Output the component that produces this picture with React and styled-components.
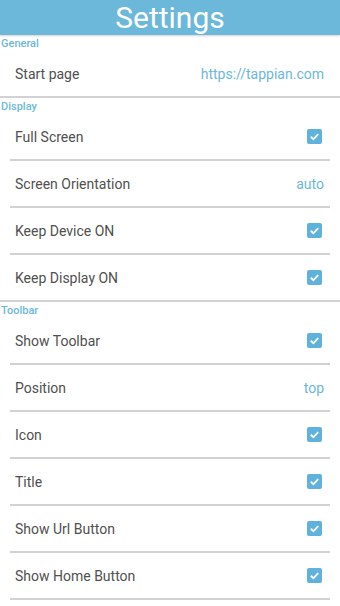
import React from 'react'
import styled, { createGlobalStyle } from 'styled-components'

const GlobalStyle = createGlobalStyle`
  html, body {
    margin: 0;
    padding: 0;
    background: #fff;
    font-family: Roboto, 'Noto Sans', sans-serif;
  }
`

const blue = '#6cb8da'

const Page = styled.div`
  width: 340px;
  height: 606px;
  overflow: hidden;
  background: #fff;
`

const AppBar = styled.header`
  height: 35px;
  background: ${blue};
  color: #fff;
  display: flex;
  align-items: center;
  justify-content: center;
  font-size: 30px;
  line-height: 1;
  padding-top: 1px;
  box-sizing: border-box;
  box-shadow: 0 1px 2px rgba(0, 0, 0, 0.18);
  position: relative;
  z-index: 1;
`

const Section = styled.section`
  border-bottom: ${(p) => (p.last ? 'none' : '2px solid #d2d2d2')};
`

const SectionTitle = styled.div`
  height: 16px;
  padding-left: 1px;
  display: flex;
  align-items: center;
  font-size: 11px;
  font-weight: 500;
  color: ${blue};
`

const Row = styled.div`
  height: 45px;
  margin: 0 10px;
  padding: 0 6px 0 5px;
  display: flex;
  align-items: center;
  justify-content: space-between;
  border-bottom: ${(p) => (p.divider ? '2px solid #d2d2d2' : 'none')};
`

const Label = styled.span`
  font-size: 14px;
  color: #505050;
`

const Value = styled.span`
  font-size: 14px;
  color: ${blue};
`

const Box = styled.span`
  width: 15px;
  height: 15px;
  margin-right: 2px;
  border-radius: 2px;
  background: #5eb2dc;
  display: flex;
  align-items: center;
  justify-content: center;
`

const Check = () => (
  <Box>
    <svg width='11' height='11' viewBox='0 0 12 12'>
      <path d='M2 6.3 L4.8 9 L10 3.3' fill='none' stroke='#fff' strokeWidth='2' />
    </svg>
  </Box>
)

const sections = [
  {
    title: 'General',
    items: [{ label: 'Start page', value: 'https://tappian.com' }]
  },
  {
    title: 'Display',
    items: [
      { label: 'Full Screen' },
      { label: 'Screen Orientation', value: 'auto' },
      { label: 'Keep Device ON' },
      { label: 'Keep Display ON' }
    ]
  },
  {
    title: 'Toolbar',
    items: [
      { label: 'Show Toolbar' },
      { label: 'Position', value: 'top' },
      { label: 'Icon' },
      { label: 'Title' },
      { label: 'Show Url Button' },
      { label: 'Show Home Button' }
    ]
  }
]

const App = () => {
  return (
    <Page>
      <GlobalStyle />
      <AppBar>Settings</AppBar>
      {sections.map((s, si) => {
        const last = si === sections.length - 1
        return (
          <Section key={s.title} last={last}>
            <SectionTitle>{s.title}</SectionTitle>
            {s.items.map((it, i) => (
              <Row key={it.label} divider={i < s.items.length - 1 || last}>
                <Label>{it.label}</Label>
                {it.value ? <Value>{it.value}</Value> : <Check />}
              </Row>
            ))}
          </Section>
        )
      })}
    </Page>
  )
}

export default App
